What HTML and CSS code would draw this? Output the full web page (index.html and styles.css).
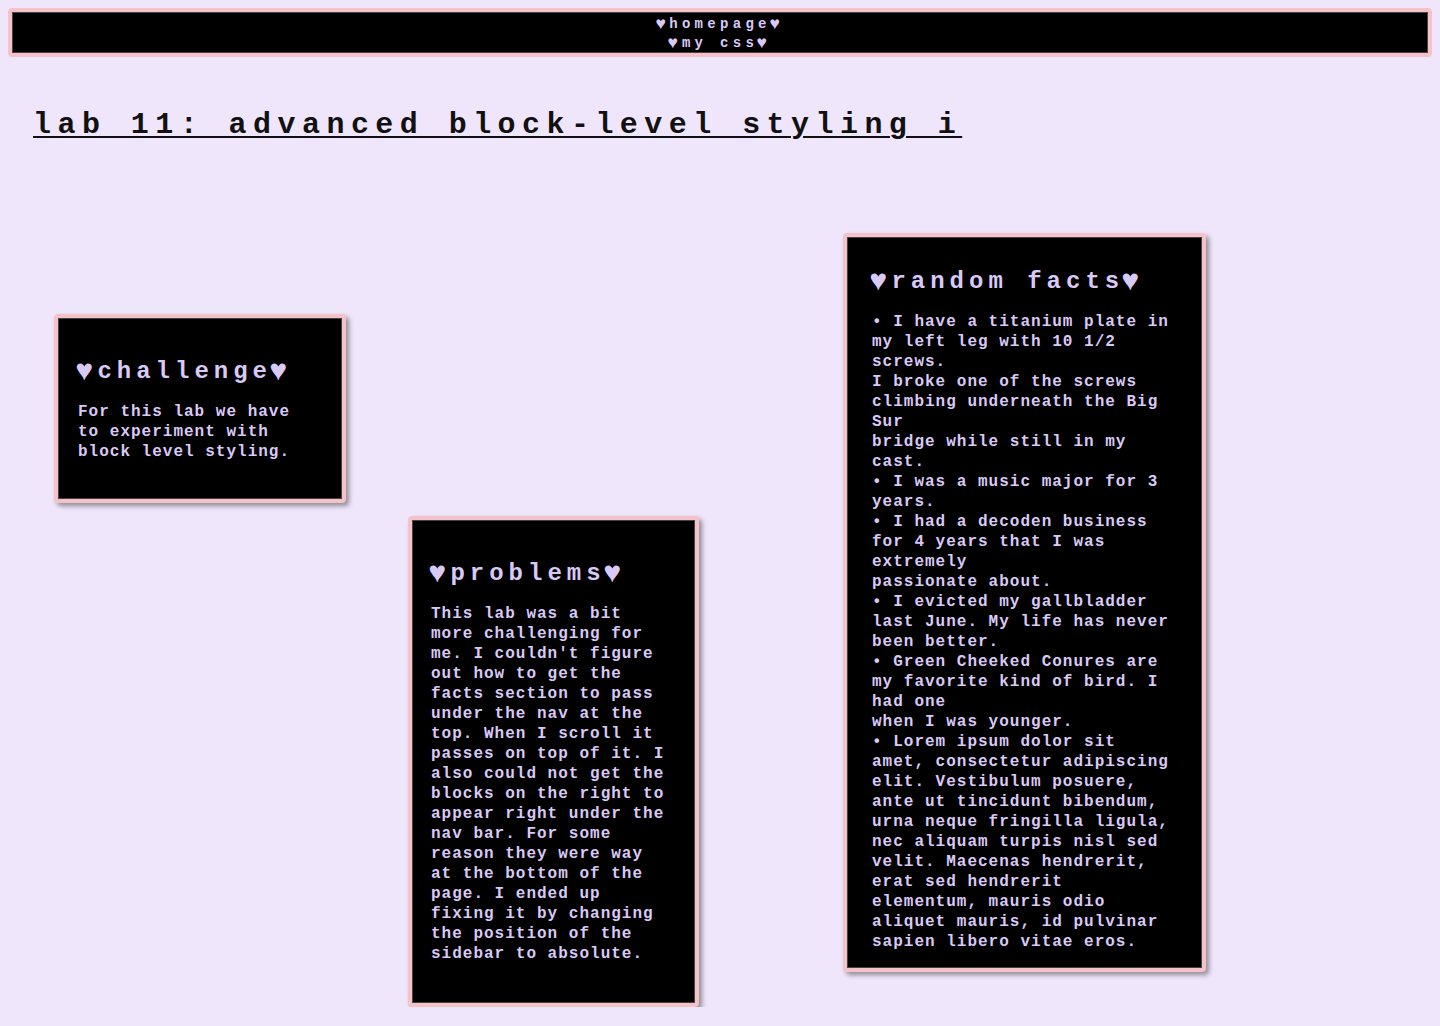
FILE: index.html
```html
<!DOCTYPE html>
<html lang="en">
<head>
<meta charset="utf-8">
<title>lab 11</title>
<link rel="stylesheet" href="styles.css">
</head>
<body>
<nav class="nav">
  <a class="nav-link" href="#"><span class="heart">♥</span>homepage<span class="heart">♥</span></a>
  <a class="nav-link" href="#"><span class="heart">♥</span>my css<span class="heart">♥</span></a>
</nav>
<h1 class="title">lab 11: advanced block-level styling i</h1>
<main class="board">
  <section class="card card-challenge">
    <h2 class="card-title"><span class="heart">♥</span>challenge<span class="heart">♥</span></h2>
    <p class="card-text">For this lab we have to experiment with block level styling.</p>
  </section>
  <section class="card card-problems">
    <h2 class="card-title"><span class="heart">♥</span>problems<span class="heart">♥</span></h2>
    <p class="card-text">This lab was a bit more challenging for me. I couldn't figure out how to get the facts section to pass under the nav at the top. When I scroll it passes on top of it. I also could not get the blocks on the right to appear right under the nav bar. For some reason they were way at the bottom of the page. I ended up fixing it by changing the position of the sidebar to absolute.</p>
  </section>
  <section class="card card-facts">
    <h2 class="card-title"><span class="heart">♥</span>random facts<span class="heart">♥</span></h2>
    <p class="card-text">• I have a titanium plate in my left leg with 10 1/2 screws.<br>I broke one of the screws climbing underneath the Big Sur<br>bridge while still in my cast.<br>• I was a music major for 3 years.<br>• I had a decoden business for 4 years that I was extremely<br>passionate about.<br>• I evicted my gallbladder last June. My life has never been better.<br>• Green Cheeked Conures are my favorite kind of bird. I had one<br>when I was younger.<br>• Lorem ipsum dolor sit amet, consectetur adipiscing elit. Vestibulum posuere, ante ut tincidunt bibendum, urna neque fringilla ligula, nec aliquam turpis nisl sed velit. Maecenas hendrerit, erat sed hendrerit elementum, mauris odio aliquet mauris, id pulvinar sapien libero vitae eros.</p>
  </section>
</main>
</body>
</html>
```
FILE: styles.css
```css
html, body {
  background: #efe6fc;
}
body {
  margin: 8px;
  font-family: "Liberation Mono", "DejaVu Sans Mono", monospace;
  color: #111;
}
.heart {
  display: inline-block;
  width: calc(0.6em + var(--ls));
  line-height: 1;
  text-align: center;
  transform: scale(1.25);
}
.nav {
  display: flex;
  flex-direction: column;
  align-items: center;
  background: #000;
  border: 4px solid #f5c2c8;
  border-radius: 4px;
  box-shadow: inset 0 0 0 1px #444;
  padding: 3px 0 0;
}
.nav-link {
  --ls: 4.3px;
  display: block;
  color: #d9c9f7;
  text-decoration: none;
  font-size: 14px;
  font-weight: bold;
  letter-spacing: var(--ls);
  line-height: 19px;
}
.title {
  margin: 51px 0 0 25px;
  font-size: 30px;
  line-height: 34px;
  letter-spacing: 6.45px;
  font-weight: bold;
  text-decoration: underline;
  text-decoration-thickness: 2px;
  text-underline-offset: 3px;
  color: #111;
}
.board {
  display: flex;
  align-items: flex-start;
}
.card {
  background: #000;
  border: 4px solid #f5c2c8;
  border-radius: 4px;
  box-shadow: inset 0 0 0 1px #444, 3px 3px 5px rgba(0, 0, 0, 0.4);
  color: #d9c9f7;
  width: 238px;
  padding: 21px 26px 21px 20px;
}
.card-title {
  --ls: 5px;
  margin: 19px 0 16px;
  font-size: 24px;
  line-height: 28px;
  letter-spacing: var(--ls);
  font-weight: bold;
}
.card-text {
  margin: 0 0 16px;
  font-size: 16px;
  line-height: 20px;
  letter-spacing: 1px;
  font-weight: bold;
}
.card-challenge {
  margin: 172px 0 0 46px;
}
.card-problems {
  margin: 374px 0 0 62px;
  padding-left: 19px;
  padding-bottom: 23px;
}
.card-facts {
  margin: 91px 0 0 144px;
  width: 300px;
  padding: 22px 30px 16px 25px;
}
.card-facts .card-title {
  margin-top: 9px;
}
.card-facts .card-text {
  margin-bottom: 0;
}
```
